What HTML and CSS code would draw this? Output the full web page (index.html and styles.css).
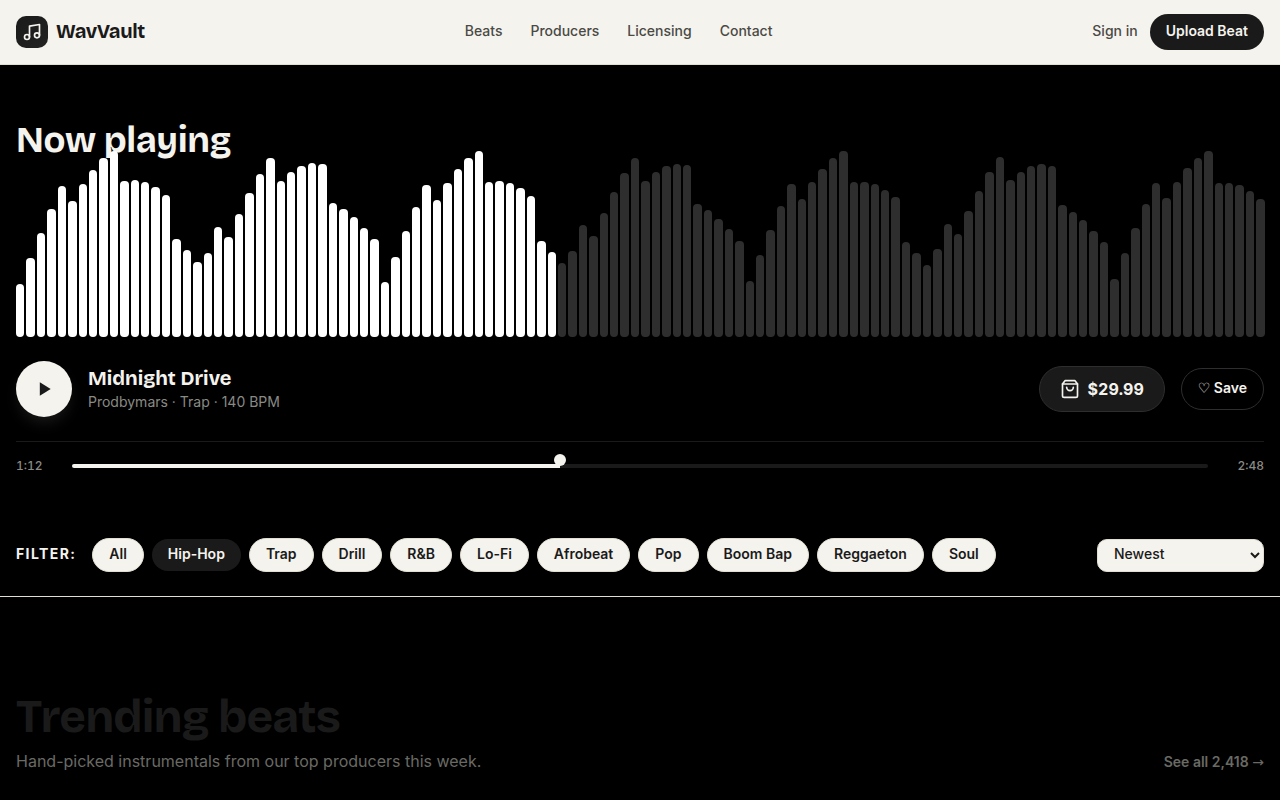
FILE: index.html
```html
<!DOCTYPE html>
<html lang="en">
<head>
  <meta charset="UTF-8" />
  <meta name="viewport" content="width=device-width, initial-scale=1.0"/>
  <title>WavVault</title>
  <link rel="stylesheet" href="styles.css">
</head>
<body>
  <header class="header">
    <a class="logo" href="#">
      <span class="logo-mark">
        <svg width="20" height="20" viewBox="0 0 24 24" fill="none" stroke="currentColor" stroke-width="2" stroke-linecap="round" stroke-linejoin="round"><path d="M9 18V5l12-2v13"/><circle cx="6" cy="18" r="3"/><circle cx="18" cy="16" r="3"/></svg>
      </span>
      <span class="logo-name">WavVault</span>
    </a>
    <nav class="nav">
      <a href="#">Beats</a>
      <a href="#">Producers</a>
      <a href="#">Licensing</a>
      <a href="#">Contact</a>
    </nav>
    <div class="header-actions">
      <a class="sign-in" href="#">Sign in</a>
      <button class="upload-btn">Upload Beat</button>
    </div>
  </header>

  <section class="player">
    <h2 class="player-title">Now playing</h2>
    <div class="waveform" id="waveform"></div>
    <div class="controls">
      <button class="play-btn" aria-label="Play">
        <svg width="20" height="20" viewBox="0 0 24 24" fill="currentColor"><path d="M7 4v16l13-8z"/></svg>
      </button>
      <div class="track">
        <h3>Midnight Drive</h3>
        <p>Prodbymars · Trap · 140 BPM</p>
      </div>
      <button class="buy-btn">
        <svg width="20" height="20" viewBox="0 0 24 24" fill="none" stroke="currentColor" stroke-width="2" stroke-linecap="round" stroke-linejoin="round"><path d="M6 2 3 6v14a2 2 0 0 0 2 2h14a2 2 0 0 0 2-2V6l-3-4Z"/><path d="M3 6h18"/><path d="M16 10a4 4 0 0 1-8 0"/></svg>
        $29.99
      </button>
      <button class="save-btn"><span class="symbol">♡</span> Save</button>
    </div>
    <div class="progress">
      <span class="time">1:12</span>
      <input class="seek" type="range" min="0" max="168" value="72" aria-label="Seek">
      <span class="time time-end">2:48</span>
    </div>
  </section>

  <section class="filters">
    <span class="filter-label">Filter:</span>
    <div class="chips">
      <button class="chip">All</button>
      <button class="chip active">Hip-Hop</button>
      <button class="chip">Trap</button>
      <button class="chip">Drill</button>
      <button class="chip">R&amp;B</button>
      <button class="chip">Lo-Fi</button>
      <button class="chip">Afrobeat</button>
      <button class="chip">Pop</button>
      <button class="chip">Boom Bap</button>
      <button class="chip">Reggaeton</button>
      <button class="chip">Soul</button>
    </div>
    <select class="sort" aria-label="Sort beats">
      <option>Newest</option>
      <option>Most popular</option>
      <option>Price: low to high</option>
    </select>
  </section>

  <section class="trending">
    <div>
      <h2>Trending beats</h2>
      <p>Hand-picked instrumentals from our top producers this week.</p>
    </div>
    <a class="see-all" href="#">See all 2,418 <span class="symbol">→</span></a>
  </section>

  <script src="script.js"></script>
</body>
</html>
```

FILE: styles.css
```css
* { box-sizing: border-box; margin: 0; padding: 0; }
body { background: #000; font-family: Inter, sans-serif; font-size: 16px; color: #f5f3ee; }
a { color: inherit; text-decoration: none; }
button, select, input { font-family: inherit; }
button { cursor: pointer; border: none; }
h2, h3, .logo { font-family: "Bricolage Grotesque", Inter, sans-serif; font-weight: 700; }
.symbol { font-family: "DejaVu Sans", sans-serif; font-weight: 400; line-height: 1; }

/* header */
.header { display: flex; align-items: center; justify-content: space-between; height: 65px; padding: 0 16px;
          background: #f5f3ee; color: #4a4a45; border-bottom: 1px solid #e2dfd0; font-size: 14px; font-weight: 500; }
.logo { display: flex; align-items: center; gap: 8px; color: #1a1a1a; font-size: 20px; letter-spacing: -0.02em; }
.logo-mark { display: flex; align-items: center; justify-content: center; width: 32px; height: 32px; border-radius: 10px;
             background: linear-gradient(135deg, #1a1a1a, #222); color: #f5f3ee; }
.logo-name { padding-bottom: 2px; }
.nav { display: flex; gap: 28px; }
.header-actions { display: flex; align-items: center; gap: 12px; }
.upload-btn { height: 36px; padding: 0 16px 3px; border-radius: 18px; background: #1a1a1a; color: #f5f3ee; font-size: 14px; font-weight: 600; }
.nav, .sign-in { padding-bottom: 3px; }

/* player */
.player { padding: 48px 16px 0; }
.player-title { font-size: 36px; line-height: 48px; padding-top: 4px; letter-spacing: -0.01em; }
.waveform { display: flex; align-items: flex-end; gap: 2px; height: 160px; margin-top: 12px; }
.bar { flex: 1; border-radius: 4px; background: #2e2e2e; }
.bar.played { background: #fff; }
.controls { display: flex; align-items: center; gap: 16px; padding: 24px 0; border-bottom: 1px solid #1a1a1a; }
.play-btn { display: flex; align-items: center; justify-content: center; width: 56px; height: 56px; border-radius: 50%;
            background: #f5f3ee; color: #1a1a1a; box-shadow: 0 8px 16px -4px #f5f3ee1f; }
.track { flex: 1; }
.track h3 { font-size: 20px; line-height: 26px; }
.track p { font-size: 14px; line-height: 22px; color: #8a8a85; }
.buy-btn { display: flex; align-items: center; gap: 8px; height: 46px; padding: 0 20px; border: 1px solid #2e2e2e; border-radius: 23px;
           background: #1a1a1a; color: #f5f3ee; font-size: 16px; font-weight: 700; font-variant-numeric: tabular-nums; }
.save-btn { height: 42px; padding: 0 16px 3px; border: 1px solid #2e2e2e; border-radius: 21px; background: transparent;
            color: #f5f3ee; font-size: 14px; font-weight: 600; }
.progress { display: flex; align-items: center; gap: 16px; padding-top: 16px; }
.time { width: 40px; font-size: 12px; line-height: 16px; font-weight: 500; color: #8a8a85; font-variant-numeric: tabular-nums; }
.time-end { text-align: right; }
.seek { appearance: none; flex: 1; min-width: 0; height: 4px; border-radius: 2px; background: linear-gradient(to right, #f5f3ee 43%, #1a1a1a 43%); }
.seek::-webkit-slider-runnable-track { height: 4px; }
.seek::-webkit-slider-thumb { appearance: none; width: 12px; height: 12px; margin-top: -10px; border-radius: 50%; background: #f5f3ee; }

/* filters */
.filters { display: flex; align-items: center; gap: 16px; margin-top: 40px; padding: 24px 16px; border-bottom: 1px solid #e2dfd0; }
.filter-label { padding-bottom: 3px; font-size: 14px; font-weight: 700; letter-spacing: 0.1em; text-transform: uppercase; }
.chips { display: flex; flex: 1; align-items: center; gap: 8px; }
.chip { height: 34px; padding: 0 16px 3px; border: 1px solid #e2dfd0; border-radius: 17px; background: #f5f3ee; color: #1a1a1a;
        font-size: 14px; font-weight: 600; }
.chip.active { height: 32px; border: none; background: #1a1a1a; color: #f5f3ee; }
.sort { width: 167px; height: 33px; padding: 0 12px 3px; border: 1px solid #e2dfd0; border-radius: 10px; background: #f5f3ee; color: #1a1a1a;
        font-size: 14px; font-weight: 500; }

/* trending */
.trending { display: flex; align-items: flex-end; justify-content: space-between; padding: 88px 16px 24px; color: #6a6a65; }
.trending h2 { color: #1a1a1a; font-size: 46px; line-height: 64px; letter-spacing: -0.02em; }
.trending p { font-size: 16px; line-height: 24px; }
.see-all { font-size: 14px; line-height: 22px; font-weight: 600; }
```

FILE: script.js
```js
// bar heights in px, one per slice of the track
const peaks = [
  53, 79, 104, 128, 151, 136, 153, 167, 179, 186, 156, 157, 155, 150, 142,
  98, 87, 75, 84, 110, 100, 123, 144, 163, 179, 156, 165, 171, 174, 173,
  134, 128, 120, 109, 98, 55, 80, 106, 130, 152, 137, 154, 168, 179, 186,
  155, 156, 154, 149, 141, 96, 85, 74, 86, 112, 101, 124, 145, 164, 179,
  156, 165, 171, 173, 172, 133, 127, 118, 108, 96, 56, 82, 107, 131, 153,
  138, 155, 168, 179, 186, 155, 155, 153, 147, 140, 95, 84, 72, 88, 113,
  103, 126, 146, 165, 180, 157, 165, 171, 173, 171, 132, 125, 117, 106, 95,
  58, 84, 109, 133, 154, 139, 155, 169, 179, 186, 154, 154, 152, 146, 138
];
const played = 72 / 168;
const waveform = document.getElementById("waveform");

peaks.forEach((peak, i) => {
  const bar = document.createElement("div");
  bar.className = i / peaks.length < played ? "bar played" : "bar";
  bar.style.height = peak + "px";
  waveform.appendChild(bar);
});
```
